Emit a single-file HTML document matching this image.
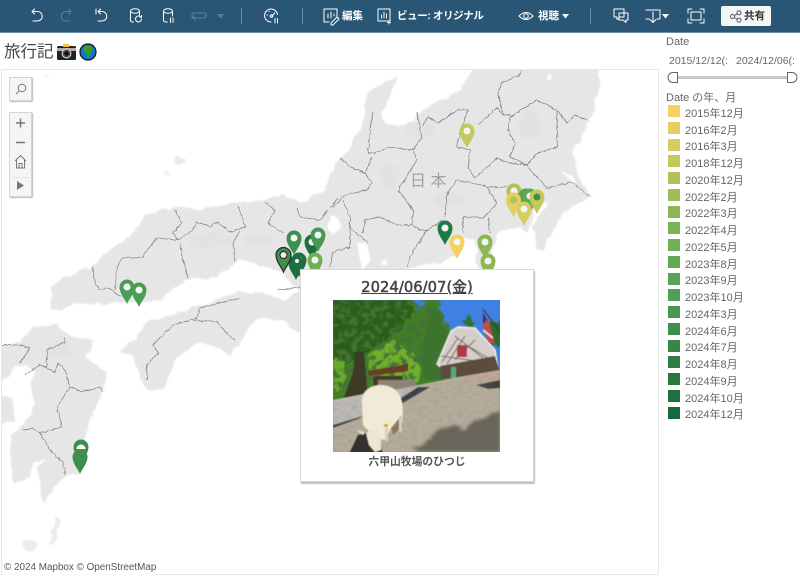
<!DOCTYPE html>
<html lang="ja">
<head>
<meta charset="utf-8">
<style>
html,body{margin:0;padding:0;background:#fff;}
body{width:800px;height:577px;overflow:hidden;position:relative;font-family:"Liberation Sans","Noto Sans CJK JP",sans-serif;color:#555;}
.abs{position:absolute;white-space:nowrap;}
#bar{position:absolute;left:0;top:0;width:800px;height:32px;background:#2a5675;border-bottom:1px solid #6f8ea3;}
.bt{position:absolute;color:#fff;font-weight:bold;font-size:10.500px;line-height:14px;top:9px;white-space:nowrap;}
.sw{position:absolute;left:668px;width:12px;height:12px;}
.lt{position:absolute;left:685px;margin-top:1px;font-size:11px;line-height:14px;color:#666;white-space:nowrap;}
.ctl{position:absolute;background:#f5f5f5;border:1px solid #d4d4d4;box-shadow:1px 1px 1px #bbb;box-sizing:border-box;}
</style>
</head>
<body>
<div id="bar"></div>
<svg class="abs" style="left:0;top:0;filter:blur(.3px)" width="800" height="32" fill="none" stroke="#fff" stroke-width="1" stroke-linecap="round" stroke-linejoin="round">
<path d="M32 11.500h5.500a4.700 4.700 0 0 1 0 9.500H33M32 11.500l2.500-2.500M32 11.500l2.500 2.500"/>
<path d="M71 11.500h-5a4.700 4.700 0 0 0 0 9.500h4M71 11.500l-2.500-2.500M71 11.500l-2.500 2.500" stroke="#5d8099"/>
<path d="M98 11.500h4a4.700 4.700 0 0 1 0 9.500h-4M98 11.500l2.500-2.500M98 11.500l2.500 2.500M96 9v5"/>
<ellipse cx="135" cy="11" rx="4.500" ry="2.200"/><path d="M130.500 11v9.500q0 1.500 3 1.500M139.500 11v4"/><path d="M141.500 19a3 3 0 1 1-1-2.300M141.500 15.500v1.800h-1.800"/>
<ellipse cx="168" cy="11" rx="4.500" ry="2.200"/><path d="M163.500 11v9.500q0 1.500 4 1.500M172.500 11v5M170.500 18v4.500M173 18v4.500"/>
<path d="M192 18v-3q0-2 2-2h10q2 0 2 2v1q0 2-2 2h-11l2 2M192 18l2-2" stroke="#5d8099"/>
<path d="M217 14h7l-3.500 4.500z" fill="#5d8099" stroke="none"/>
<path d="M241.500 8v16M302.500 8v16M590.500 8v16" stroke="#6f8ea3" stroke-width="1"/>
<path d="M271 22a6.500 6.500 0 1 1 6.500-7.500M272 16l2.800-3.200"/><circle cx="271.500" cy="16" r="1.300"/><path d="M275 18.500v4.500M277.500 18.500v4.500M267 15h.5M269 11.500h.5"/>
<path d="M329 22h-5V9h13v8M328 18v-4M331 18v-6M334 16v-2M331 23l6-6 2 2-6 6h-2z"/>
<path d="M378 9h12v12h-12zM381.500 18v-3M384 18v-6M386.500 18v-4M389 21v3M387.500 22.500h3"/>
<path d="M519 16q7-7 14 0q-7 7-14 0z"/><circle cx="526" cy="16" r="2.300"/>
<path d="M562 14h7l-3.500 4.500zM662 14h7l-3.500 4.500z" fill="#fff" stroke="none"/>
<path d="M614 9h10v8h-4l-3 2.500V17h-3zM619 13h9v7h-2v2.500l-3-2.500h-4z"/>
<path d="M646 10h14v9h-3M649 19h-3zM653 12v10M650 19.500l3 3 3-3"/>
<path d="M688 13v-4h4M700 9h4v4M704 19v4h-4M692 23h-4v-4"/><rect x="691" y="12" width="10" height="8"/>
</svg>
<div class="bt" style="left:342px">編集</div>
<div class="bt" style="left:397px;letter-spacing:-.4px">ビュー: オリジナル</div>
<div class="bt" style="left:538px">視聴</div>
<div class="abs" style="left:721px;top:6px;width:50px;height:20px;background:#f5f5f5;border-radius:2px;"></div>
<svg class="abs" style="left:729px;top:10px" width="14" height="14" fill="none" stroke="#556" stroke-width="1"><circle cx="3.500" cy="6.500" r="2"/><circle cx="10" cy="2.800" r="2"/><circle cx="10" cy="10.200" r="2"/><path d="M5.300 5.500l3-1.700M5.300 7.500l3 1.700"/></svg>
<div class="abs" style="left:744px;top:9px;font-size:10.500px;line-height:14px;font-weight:bold;color:#333">共有</div>

<div class="abs" style="left:4px;top:40px;font-size:16.500px;line-height:24px;color:#444">旅行記</div>
<svg class="abs" style="left:56px;top:42px" width="42" height="20">
<rect x="1" y="4" width="19" height="14" rx="1.500" fill="#222"/><rect x="1" y="6" width="19" height="3" fill="#b9a9a6"/><rect x="7" y="2" width="6" height="3" fill="#f2c53d"/><circle cx="10.500" cy="11.500" r="4.500" fill="#555" stroke="#ddd" stroke-width="1"/><circle cx="10.500" cy="11.500" r="2.300" fill="#111"/>
<circle cx="32" cy="10" r="8" fill="#0b79d0" stroke="#111" stroke-width="1.200"/><path d="M29 4q4-2 7 1l1 3-2 2-1 4-2 2-1-4-3-2-1-3z" fill="#3e9b1e"/>
</svg>

<div class="abs" style="left:1px;top:69px;width:658px;height:506px;border:1px solid #e8e8e8;box-sizing:border-box;"></div>
<svg class="abs" style="left:0;top:0" width="660" height="577">
<defs>
<clipPath id="m"><rect x="2" y="70" width="656" height="504"/></clipPath>
<filter id="coast" filterUnits="userSpaceOnUse" x="0" y="0" width="660" height="577">
<feTurbulence type="fractalNoise" baseFrequency=".09" numOctaves="3" seed="4" result="t"/>
<feDisplacementMap in="SourceGraphic" in2="t" scale="7" xChannelSelector="R" yChannelSelector="G"/>
<feGaussianBlur stdDeviation=".7"/>
</filter>
<filter id="line" filterUnits="userSpaceOnUse" x="0" y="0" width="660" height="577">
<feTurbulence type="fractalNoise" baseFrequency=".25" numOctaves="2" seed="7" result="t"/>
<feDisplacementMap in="SourceGraphic" in2="t" scale="3" xChannelSelector="R" yChannelSelector="G"/>
<feGaussianBlur stdDeviation=".3"/>
</filter>
<filter id="soft" filterUnits="userSpaceOnUse" x="0" y="0" width="660" height="577"><feGaussianBlur stdDeviation=".35"/></filter>
<path id="pin" d="M0 17C-2 12-7.500 6.500-7.500 0A7.500 7.500 0 1 1 7.500 0C7.500 6.500 2 12 0 17Z"/>
</defs>
<g clip-path="url(#m)">
<g fill="#e6e6e6" filter="url(#coast)">
<path d="M50 287L62 278 92 267 110 250 133 233 147 214 173 207 200 210 240 202 265 200 283 195 300 203 325 190 330 173 350 147 363 120 367 93 397 75 395 88 380 113 387 125 407 125 423 110 457 93 477 65 597 65 600 87 593 113 573 153 577 173 590 197 563 213 543 250 537 247 533 227 547 203 535 205 530 233 520 227 497 233 493 247 488 270 478 270 475 240 463 238 458 255 440 262 400 270 400 290 300 290 277 270 240 260 217 277 187 280 160 300 127 303 80 303 53 310Z"/>
<path d="M118 352L133 340 147 322 170 315 195 308 215 300 240 292 270 295 285 300 300 290 320 290 310 340 283 320 255 320 230 357 225 350 200 342 177 357 163 390 147 390 140 375 132 355Z"/>
<path d="M-5 345L20 343 33 325 57 325 70 336 93 340 85 358 107 373 103 393 90 417 83 443 80 473 63 477 43 502 40 483 38 467 45 460 33 462 30 478 13 483 10 447 13 433 25 425 35 405 30 385 35 372 25 365 15 368 8 378 -5 385Z"/>
<path d="M-5 395L12 398 15 420 -5 428Z"/>
<circle cx="30" cy="545" r="6.500" fill="#ececec"/><path d="M58 515L60 520 54 544 49 544 53 528Z" fill="#ececec"/>
<circle cx="179" cy="161" r="5" fill="#eaeaea"/><circle cx="167" cy="173" r="3" fill="#f2f2f2"/><circle cx="47" cy="76" r="2.500" fill="#f0f0f0"/>
</g>
<g fill="#fff" filter="url(#coast)">
<path d="M331 213L339 218 340 230 332 234 328 226Z"/><path d="M357 245L366 243 372 262 360 269Z"/><circle cx="548" cy="78" r="2.500"/><path d="M562 172L566 172 578 183 574 183Z"/><circle cx="383" cy="261" r="3"/>
</g>
<g fill="#e0e0e0" opacity=".55" filter="url(#coast)">
<ellipse cx="210" cy="240" rx="22" ry="8"/><ellipse cx="530" cy="125" rx="12" ry="14"/><ellipse cx="420" cy="130" rx="16" ry="8"/><ellipse cx="450" cy="200" rx="16" ry="7"/><ellipse cx="60" cy="350" rx="12" ry="8"/><ellipse cx="260" cy="240" rx="16" ry="7"/><ellipse cx="390" cy="175" rx="10" ry="14"/>
</g>
<g fill="none" stroke="#808080" stroke-width=".75" stroke-linejoin="round" filter="url(#line)">
<path d="M92 267L95 283 100 290 110 288 115 293 122 297M115 290L117 267 122 258 143 257 147 250 157 238 178 240 173 233 182 223 175 210M178 240L193 230 197 222 210 227 217 222 230 232 245 227 238 205M240 230L233 243 235 262M180 243L183 260 188 278M265 202L275 210 268 223 283 233M297 208L300 217 320 220 328 210"/>
<path d="M200 308L197 318 173 325 153 345 158 353 147 365 147 380M200 308L240 298M193 320L217 322 227 333 235 340M277 290L300 287"/>
<path d="M2 345L20 345 30 348 20 363M25 375L40 365 55 372 58 363 65 370 70 387 57 407 62 427 40 433 33 428 22 430M40 433L50 450 63 463 65 475M70 387L83 392 100 387 103 392M47 367L47 350 65 342 65 337"/>
<path d="M373 112L370 130 368 153 375 153 388 147 413 150 422 137 417 112M423 125L428 117 438 123 458 110 468 110 460 133 457 147 470 150 468 168 475 178 497 158 510 163 527 165 533 173 547 188 572 182 590 197M473 183L487 187 507 187M527 165L510 157 515 143 508 130 510 117 537 100 557 110 557 147 537 153 527 165M478 125L497 108 503 115 510 115M503 113L498 93 502 83 520 75 522 70M557 110L567 123 575 115 587 120M473 183L457 180 447 193 445 217M340 158L350 167 365 173 372 157M365 173L372 183 367 190 345 195 333 207M398 190L417 160 413 150M398 190L413 210 412 225 420 230 427 230 443 220M412 225L397 225 380 217 365 220 363 233M343 200L350 217 350 228 368 243M427 230L410 257 408 267M463 217L483 218 497 203 487 187M463 217V233M488 218L490 233M350 230V247L333 252 330 267M330 208L338 198"/>
</g>
<text x="410" y="186" font-family="'Liberation Sans','Noto Sans CJK JP',sans-serif" font-size="16" fill="#a2a2a2" letter-spacing="4.500">日本</text>
<g filter="url(#soft)">
<use href="#pin" x="127" y="287" fill="#4a9e55"/><use href="#pin" x="139" y="290" fill="#4a9e55"/>
<circle cx="127" cy="287" r="3.500" fill="#f4f4f4"/><circle cx="139" cy="290" r="3.500" fill="#f4f4f4"/>
<use href="#pin" x="294" y="238" fill="#3d8f4d"/><circle cx="294" cy="238" r="3.500" fill="#f4f4f4"/>
<use href="#pin" x="312" y="242" fill="#1f7040"/><circle cx="312" cy="242" r="3.500" fill="#f4f4f4"/>
<use href="#pin" x="318" y="235" fill="#489753"/><circle cx="318" cy="235" r="3.500" fill="#f4f4f4"/>
<use href="#pin" x="315" y="260" fill="#70af55"/><circle cx="315" cy="260" r="3.500" fill="#f4f4f4"/>
<use href="#pin" x="299" y="260" fill="#1f7040"/><circle cx="299" cy="260" r="3.500" fill="#f4f4f4"/>
<use href="#pin" x="296" y="263" fill="#1f7040"/><circle cx="297" cy="261" r="2" fill="#f4f4f4"/>
<use href="#pin" x="283.500" y="255" fill="#3f8f4e" stroke="#2a2a2a" stroke-width="1.200"/><circle cx="283.500" cy="255" r="3.500" fill="#eee" stroke="#222" stroke-width="1"/>
<use href="#pin" x="467" y="131" fill="#c4c95c"/><circle cx="467" cy="131" r="3.500" fill="#f4f4f4"/>
<use href="#pin" x="445" y="228" fill="#1f7a45"/><circle cx="445" cy="228" r="3.500" fill="#f4f4f4"/>
<use href="#pin" x="457" y="242" fill="#f5d063"/><circle cx="457" cy="242" r="3.500" fill="#f4f4f4"/>
<use href="#pin" x="485" y="242" fill="#8bb755"/><circle cx="485" cy="242" r="3.500" fill="#f4f4f4"/>
<use href="#pin" x="488" y="261" fill="#8bb755"/><circle cx="488" cy="261" r="3.500" fill="#f4f4f4"/>
<use href="#pin" x="514" y="191" fill="#b2c058"/><circle cx="514" cy="191" r="3.500" fill="#f4f4f4"/>
<use href="#pin" x="526" y="196" fill="#58a356"/><use href="#pin" x="530" y="196" fill="#62a855"/><circle cx="530" cy="196" r="3.500" fill="#f4f4f4"/>
<use href="#pin" x="537" y="197" fill="#c4c95c"/><circle cx="537" cy="197" r="3.500" fill="#3d8f4d"/>
<use href="#pin" x="513.500" y="200" fill="#e6cf62"/><circle cx="513.500" cy="200" r="3.500" fill="#b2c058"/>
<use href="#pin" x="524" y="209" fill="#d6cd60"/><circle cx="524" cy="209" r="3.500" fill="#f4f4f4"/>
<use href="#pin" x="81" y="447" fill="#3d8f4d"/><path d="M76.500 449a4.500 4.500 0 0 1 9 0z" fill="#fff"/>
<use href="#pin" x="80" y="457" fill="#3d8f4d"/>
</g>
</g>
</svg>

<div class="ctl" style="left:9px;top:77px;width:23px;height:24px"></div>
<svg class="abs" style="left:15px;top:83px" width="12" height="12" fill="none" stroke="#777" stroke-width="1"><circle cx="7" cy="5" r="3.800"/><path d="M4.200 7.800L1 11"/></svg>
<div class="ctl" style="left:9px;top:112px;width:23px;height:85px"></div>
<svg class="abs" style="left:9px;top:112px" width="23" height="85" fill="none" stroke="#777">
<path d="M7 11h9M11.500 6.500v9M7 30.500h9" stroke-width="1.500"/>
<path d="M6 49l5.500-5.500L17 49M7.500 48v8h8v-8M10 56v-4.500h3V56" stroke-width="1"/>
<path d="M3 65.500h17" stroke="#e3e3e3"/>
<path d="M8 69l7 4.500-7 4.500z" fill="#777" stroke="none"/>
</svg>

<div class="abs" style="left:300px;top:269px;width:234px;height:213px;background:#fff;border:1px solid #d8d8d8;box-sizing:border-box;box-shadow:1px 2px 1px #bdbdbd;"></div>
<div class="abs" style="left:300px;top:279px;width:234px;text-align:center;font-family:'DejaVu Sans','Noto Sans CJK JP',sans-serif;font-size:14.800px;line-height:18px;color:#444;text-decoration:underline;-webkit-text-stroke:.5px #444;">2024/06/07(金)</div>
<svg class="abs" style="left:333px;top:300px;" width="167" height="152" viewBox="0 0 167 152">
<defs>
<filter id="b" filterUnits="userSpaceOnUse" x="0" y="0" width="167" height="152"><feGaussianBlur stdDeviation=".6"/></filter>
<filter id="org" filterUnits="userSpaceOnUse" x="0" y="0" width="167" height="152"><feTurbulence type="fractalNoise" baseFrequency=".14" numOctaves="2" seed="3" result="t"/><feDisplacementMap in="SourceGraphic" in2="t" scale="9" xChannelSelector="R" yChannelSelector="G"/><feGaussianBlur stdDeviation=".6"/></filter>
<filter id="shade" filterUnits="userSpaceOnUse" x="0" y="0" width="167" height="152"><feTurbulence type="fractalNoise" baseFrequency=".05 .16" numOctaves="2" seed="3" result="t"/><feDisplacementMap in="SourceGraphic" in2="t" scale="16" xChannelSelector="R" yChannelSelector="G"/><feGaussianBlur stdDeviation="1.500"/></filter>
<filter id="dark" filterUnits="userSpaceOnUse" x="0" y="0" width="167" height="152"><feTurbulence type="fractalNoise" baseFrequency=".16" numOctaves="3" seed="9"/><feColorMatrix values="0 0 0 0 .06 0 0 0 0 .16 0 0 0 0 .04 5 0 0 0 -2.300"/><feGaussianBlur stdDeviation=".6"/></filter>
<filter id="grain" filterUnits="userSpaceOnUse" x="0" y="0" width="167" height="152"><feTurbulence type="fractalNoise" baseFrequency=".2 .35" numOctaves="2" seed="5"/><feColorMatrix values="0 0 0 0 .25 0 0 0 0 .22 0 0 0 0 .18 3 0 0 0 -1.300"/><feGaussianBlur stdDeviation=".5"/></filter>
<clipPath id="c"><rect width="167" height="152"/></clipPath>
<clipPath id="tr"><path d="M0 0H78L88 0 105 0 118 35 122 60 118 82 40 90 0 100Z"/></clipPath>
<clipPath id="gr"><path d="M0 103L85 88 167 72V152H0Z"/></clipPath>
</defs>
<g clip-path="url(#c)">
<rect width="167" height="152" fill="#3f80e0"/>
<g filter="url(#org)">
<path d="M-10-10H80L84 14 92 2 100-10 108 10 116 30 122 60 118 82 0 105-10 105Z" fill="#3f7f25"/>
<path d="M-10-10H74L80 12 65 32 50 42 30 55 0 70-10 70Z" fill="#2a6019"/>
<path d="M35 55L60 40 82 55 90 78 40 90Z" fill="#70b02a"/>
<path d="M-5 60L12 60 12 88 -5 92Z" fill="#6bac2d"/>
<path d="M88 78L92 35 100 5 108 15 116 38 120 62 116 80Z" fill="#37752a"/>
<path d="M128 22L136 16 142 25 136 26Z" fill="#35702f"/>
<rect x="156" y="22" width="14" height="22" fill="#2e6a2b"/>
</g>
<rect width="167" height="152" filter="url(#dark)" clip-path="url(#tr)"/>
<path d="M22 52L31 52 35 100 11 98 20 72Z" fill="#3d3b28" filter="url(#b)"/>
<g filter="url(#b)">
<path d="M104 64L118 31 125 26 142 28 162 50 165 68 119 77Z" fill="#d6cfc9"/>
<path d="M125 27L142 28 162 50 165 68 119 77 104 64 118 31Z" fill="none" stroke="#f2ede9" stroke-width="1.500"/>
<path d="M109 62L125 38M114 64L132 36M122 60L142 40M135 46L158 60M122 36L150 58M108 56L150 62" stroke="#6d6460" stroke-width="1"/>
<rect x="124" y="45" width="10" height="12" fill="#ad3a44"/>
<path d="M107 66L162 56 167 72 125 78 108 78Z" fill="#5d4c3d"/>
<path d="M150 9L167 32" stroke="#333" stroke-width="1"/>
<path d="M150 12L156 22 162 44 155 42 150 28Z" fill="#c54a4e"/><path d="M150 12L154 20 150 24Z" fill="#26366e"/><path d="M150 30L160 38" stroke="#eee" stroke-width="1.500"/>
<path d="M35 71L75 64 75 71 36 76Z" fill="#6a3a25"/><rect x="40" y="76" width="30" height="10" fill="#4a3a2c"/><rect x="45" y="80" width="38" height="10" fill="#8a8578"/>
<rect x="118" y="67" width="5" height="11" fill="#58a878"/>
<path d="M0 103L60 90 85 85 120 78 167 70V152H0Z" fill="#b5ad9c"/>
<path d="M0 100L40 92 85 88 60 100 25 117 0 125Z" fill="#bcbab7"/>
<path d="M70 103L97 87 85 87 65 100ZM0 125L30 116 25 119 0 128Z" fill="#3a4148"/>
<path d="M125 78L167 73V80L150 82Z" fill="#c2a592"/>
<path d="M143 85L167 80V88L155 89Z" fill="#3f3f40"/>
</g>
<rect width="167" height="152" filter="url(#grain)" clip-path="url(#gr)" opacity=".25"/>
<g filter="url(#shade)">
<path d="M70 160L105 132 135 124 178 108V160Z" fill="#6b655a"/>
</g>
<g filter="url(#b)">
<path d="M15 156L25 135 45 130 50 156Z" fill="#35322f"/>
<path d="M29 105Q27 88 45 85 62 84 68 98 71 108 69 125L58 128 52 140 42 138 30 125Z" fill="#f0ead6"/>
<path d="M58 128L68 116 69 122 70 126 60 135Z" fill="#8a7a60"/>
<path d="M33 133L41 128 48 135 48 150 42 152 36 145Z" fill="#eee6d2"/>
<path d="M23 130L32 132 30 135Z" fill="#e4e0d8"/><rect x="51" y="124" width="4" height="3" fill="#e0a020"/>
<path d="M52 128h3v13h-3zM66 118h3v14h-3z" fill="#d7cfba"/>
</g>
</g>
</svg>
<div class="abs" style="left:300px;top:455px;width:234px;text-align:center;font-size:10.800px;line-height:15px;font-weight:bold;color:#555;">六甲山牧場のひつじ</div>
<div class="abs" style="left:4px;top:561px;font-size:9.900px;line-height:14px;color:#555;background:rgba(255,255,255,.8);">© 2024 Mapbox © OpenStreetMap</div>

<div class="abs" style="left:666px;top:35px;font-size:11px;line-height:14px;color:#666;">Date</div>
<div class="abs" style="left:669px;top:54px;width:63px;overflow:hidden;font-size:10.500px;line-height:14px;color:#666;">2015/12/12(:</div>
<div class="abs" style="left:736px;top:54px;width:64px;overflow:hidden;font-size:10.500px;line-height:14px;color:#666;">2024/12/06(:</div>
<div class="abs" style="left:676px;top:76px;width:113px;height:3px;background:#c8c8c8;"></div>
<svg class="abs" style="left:667px;top:71px" width="133" height="14" fill="#fff" stroke="#666" stroke-width="1"><path d="M10.500 1.500H6a5 5 0 0 0 0 10h4.500z"/><path d="M120.500 1.500H125a5 5 0 0 1 0 10h-4.500z"/></svg>
<div class="abs" style="left:666px;top:91px;font-size:11px;line-height:14px;color:#666;">Date の年、月</div>

<div class="sw" style="top:105px;background:#f5d063"></div><div class="lt" style="top:106px">2015年12月</div>
<div class="sw" style="top:122px;background:#e6cf62"></div><div class="lt" style="top:123px">2016年2月</div>
<div class="sw" style="top:139px;background:#d6cd60"></div><div class="lt" style="top:139px">2016年3月</div>
<div class="sw" style="top:155px;background:#c4c95c"></div><div class="lt" style="top:156px">2018年12月</div>
<div class="sw" style="top:172px;background:#b2c058"></div><div class="lt" style="top:173px">2020年12月</div>
<div class="sw" style="top:189px;background:#9fbd5a"></div><div class="lt" style="top:190px">2022年2月</div>
<div class="sw" style="top:206px;background:#8bb755"></div><div class="lt" style="top:206px">2022年3月</div>
<div class="sw" style="top:222px;background:#7bb254"></div><div class="lt" style="top:223px">2022年4月</div>
<div class="sw" style="top:239px;background:#70af55"></div><div class="lt" style="top:240px">2022年5月</div>
<div class="sw" style="top:256px;background:#62a855"></div><div class="lt" style="top:257px">2023年8月</div>
<div class="sw" style="top:273px;background:#58a356"></div><div class="lt" style="top:273px">2023年9月</div>
<div class="sw" style="top:289px;background:#4f9e56"></div><div class="lt" style="top:290px">2023年10月</div>
<div class="sw" style="top:306px;background:#489753"></div><div class="lt" style="top:307px">2024年3月</div>
<div class="sw" style="top:323px;background:#3d8f4d"></div><div class="lt" style="top:324px">2024年6月</div>
<div class="sw" style="top:340px;background:#378548"></div><div class="lt" style="top:340px">2024年7月</div>
<div class="sw" style="top:356px;background:#307d44"></div><div class="lt" style="top:357px">2024年8月</div>
<div class="sw" style="top:373px;background:#2a763f"></div><div class="lt" style="top:374px">2024年9月</div>
<div class="sw" style="top:390px;background:#1f7040"></div><div class="lt" style="top:391px">2024年10月</div>
<div class="sw" style="top:407px;background:#16693a"></div><div class="lt" style="top:407px">2024年12月</div>
</body>
</html>
